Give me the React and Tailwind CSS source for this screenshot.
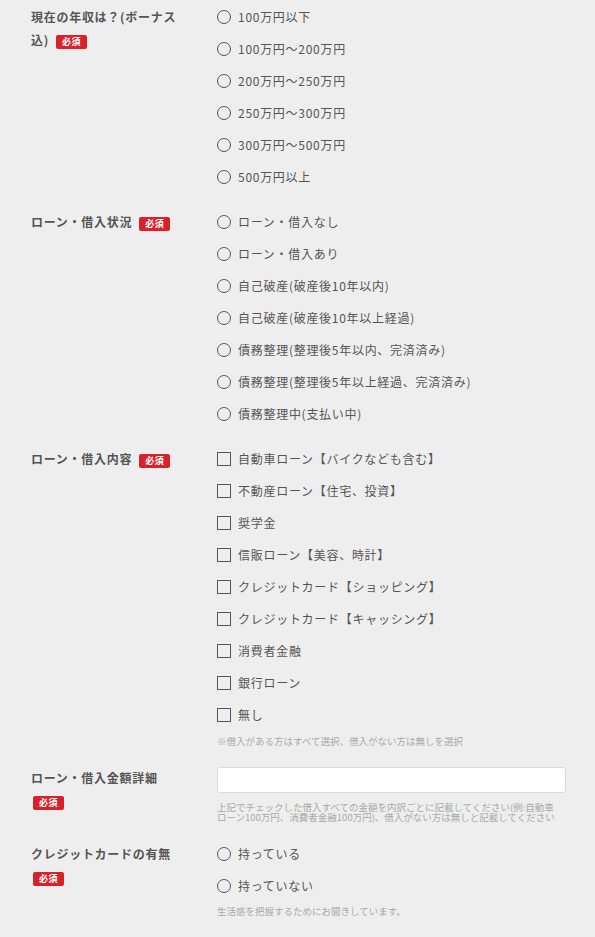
import React from "react";

const font = "font-['Noto_Sans_CJK_JP','Noto_Sans',sans-serif]";

function Badge() {
  return (
    <span className="inline-flex items-center justify-center w-[31px] h-[14px] rounded-[2px] bg-[#d8222a] text-white text-[9px] font-bold leading-none tracking-[0.05em] align-middle">
      必須
    </span>
  );
}

function Radio({ label }) {
  return (
    <label className="flex items-center h-[32px] gap-[7px] text-[12px] text-[#555] tracking-[0.06em]">
      <span className="w-[14px] h-[14px] rounded-full border border-[#555] bg-transparent shrink-0" />
      {label}
    </label>
  );
}

function Check({ label }) {
  return (
    <label className="flex items-center h-[32px] gap-[7px] text-[12px] text-[#555] tracking-[0.06em]">
      <span className="w-[14px] h-[14px] border border-[#555] shrink-0" />
      {label}
    </label>
  );
}

function Note({ children, className = "" }) {
  return (
    <p className={`text-[9.5px] text-[#a9a9a9] ${className}`}>{children}</p>
  );
}

function Row({ label, children, className = "" }) {
  return (
    <div className={`flex ${className}`}>
      <div className="w-[217px] shrink-0 pl-[31px] pr-[36px] pt-[4px] text-[12px] font-bold text-[#555] leading-[23px] tracking-[0.06em]">
        {label}
      </div>
      <div className="flex-1 pr-[29px]">{children}</div>
    </div>
  );
}

export default function App() {
  const income = [
    "100万円以下",
    "100万円～200万円",
    "200万円～250万円",
    "250万円～300万円",
    "300万円～500万円",
    "500万円以上",
  ];
  const status = [
    "ローン・借入なし",
    "ローン・借入あり",
    "自己破産(破産後10年以内)",
    "自己破産(破産後10年以上経過)",
    "債務整理(整理後5年以内、完済済み)",
    "債務整理(整理後5年以上経過、完済済み)",
    "債務整理中(支払い中)",
  ];
  const loans = [
    "自動車ローン【バイクなども含む】",
    "不動産ローン【住宅、投資】",
    "奨学金",
    "信販ローン【美容、時計】",
    "クレジットカード【ショッピング】",
    "クレジットカード【キャッシング】",
    "消費者金融",
    "銀行ローン",
    "無し",
  ];

  return (
    <div className={`min-h-[937px] w-[595px] bg-[#eeeeee] pt-[1px] ${font}`}>
      <Row
        label={
          <>
            現在の年収は？(ボーナス込)<span className="ml-[7px]"><Badge /></span>
          </>
        }
      >
        {income.map((t) => (
          <Radio key={t} label={t} />
        ))}
      </Row>

      <Row
        className="mt-[13px]"
        label={
          <>
            ローン・借入状況<span className="ml-[7px]"><Badge /></span>
          </>
        }
      >
        {status.map((t) => (
          <Radio key={t} label={t} />
        ))}
      </Row>

      <Row
        className="mt-[13px]"
        label={
          <>
            ローン・借入内容<span className="ml-[7px]"><Badge /></span>
          </>
        }
      >
        {loans.map((t) => (
          <Check key={t} label={t} />
        ))}
        <Note className="mt-[3px] leading-[14px]">
          ※借入がある方はすべて選択、借入がない方は無しを選択
        </Note>
      </Row>

      <Row
        className="mt-[14px]"
        label={
          <>
            <div>ローン・借入金額詳細</div>
            <div className="pl-[2px]">
              <Badge />
            </div>
          </>
        }
      >
        <input
          type="text"
          className="mt-[5px] block w-full h-[26px] rounded-[3px] border border-[#dcdcdc] bg-white px-2 text-[12px] outline-none"
        />
        <Note className="mt-[9px] pr-[6px] leading-[10px]">
          上記でチェックした借入すべての金額を内訳ごとに記載してください(例:自動車ローン100万円、消費者金融100万円)、借入がない方は無しと記載してください
        </Note>
      </Row>

      <Row
        className="mt-[16px]"
        label={
          <>
            <div>クレジットカードの有無</div>
            <div className="pl-[2px]">
              <Badge />
            </div>
          </>
        }
      >
        <Radio label="持っている" />
        <Radio label="持っていない" />
        <Note className="mt-[2px] leading-[14px]">
          生活感を把握するためにお聞きしています。
        </Note>
      </Row>
    </div>
  );
}
